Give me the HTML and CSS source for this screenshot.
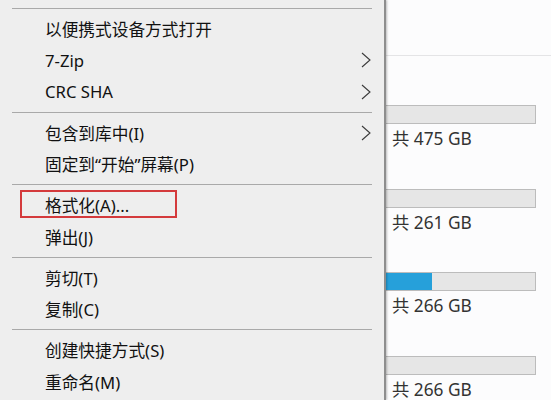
FILE: index.html
```html
<!DOCTYPE html>
<html lang="zh-CN">
<head>
<meta charset="utf-8">
<link rel="stylesheet" href="styles.css">
</head>
<body>
<div class="screen">
  <div class="menu">
    <div class="sep"></div>
    <div class="item">以便携式设备方式打开</div>
    <div class="item">7-Zip<svg class="chev" viewBox="0 0 10 16"><path d="M1 1 L9 8 L1 15" /></svg></div>
    <div class="item">CRC SHA<svg class="chev" viewBox="0 0 10 16"><path d="M1 1 L9 8 L1 15" /></svg></div>
    <div class="sep"></div>
    <div class="item">包含到库中(I)<svg class="chev" viewBox="0 0 10 16"><path d="M1 1 L9 8 L1 15" /></svg></div>
    <div class="item">固定到“开始”屏幕(P)</div>
    <div class="sep"></div>
    <div class="item marked">格式化(A)...</div>
    <div class="item">弹出(J)</div>
    <div class="sep"></div>
    <div class="item">剪切(T)</div>
    <div class="item">复制(C)</div>
    <div class="sep"></div>
    <div class="item">创建快捷方式(S)</div>
    <div class="item">重命名(M)</div>
  </div>
  <div class="pane">
    <div class="rule"></div>
    <div class="drives">
      <div class="drive">
        <div class="bar"><div class="fill" style="width:0px"></div></div>
        <div class="size">共 475 GB</div>
      </div>
      <div class="drive">
        <div class="bar"><div class="fill" style="width:0px"></div></div>
        <div class="size">共 261 GB</div>
      </div>
      <div class="drive">
        <div class="bar"><div class="fill" style="width:48px"></div></div>
        <div class="size">共 266 GB</div>
      </div>
      <div class="drive">
        <div class="bar"><div class="fill" style="width:0px"></div></div>
        <div class="size">共 266 GB</div>
      </div>
    </div>
  </div>
</div>
</body>
</html>
```

FILE: styles.css
```css
html, body {
  margin: 0;
  padding: 0;
  background: #fcfcfd;
}

.screen {
  display: flex;
  width: 551px;
  height: 400px;
  overflow: hidden;
  font-family: "Noto Sans", "Noto Sans CJK SC", sans-serif;
}

.menu {
  flex: 0 0 386px;
  box-sizing: border-box;
  background: #eeeeee;
  border-right: 2px solid #8e8e8e;
  box-shadow: 1px 0 2px rgba(0, 0, 0, 0.25);
  padding-top: 3.5px;
  display: flex;
  flex-direction: column;
  position: relative;
  z-index: 2;
  color: #111;
  font-size: 16.7px;
}

.sep {
  height: 9.5px;
  flex: 0 0 9.5px;
  display: flex;
  align-items: center;
  padding-left: 12px;
}

.sep::before {
  content: "";
  display: block;
  width: 360px;
  height: 1px;
  background: #a9a9a9;
}

.item {
  height: 31.5px;
  flex: 0 0 31.5px;
  display: flex;
  align-items: center;
  justify-content: space-between;
  padding-left: 45px;
  padding-right: 13px;
  white-space: nowrap;
  position: relative;
}

.chev {
  width: 10px;
  height: 16px;
  fill: none;
  stroke: #3a3a3a;
  stroke-width: 1.1;
}

.marked::after {
  content: "";
  position: absolute;
  left: 20px;
  top: 0.5px;
  width: 157px;
  height: 28px;
  box-sizing: border-box;
  border: 2px solid #d43a3c;
}

.pane {
  flex: 1;
  padding-top: 55px;
  margin-left: -2px;
}

.rule {
  height: 1px;
  background: #e4e4e6;
}

.drives {
  margin-top: 49px;
  display: flex;
  flex-direction: column;
  gap: 38.7px;
}

.drive {
  display: flex;
  flex-direction: column;
}

.bar {
  width: 152px;
  height: 19px;
  box-sizing: border-box;
  background: #e6e6e6;
  border: 1px solid #bcbcbc;
  border-left: none;
  display: flex;
}

.fill {
  background: #26a0da;
  height: 100%;
}

.size {
  margin-top: 4px;
  height: 22px;
  line-height: 22px;
  padding-left: 8px;
  font-size: 17.3px;
  color: #333;
  white-space: nowrap;
}
```
